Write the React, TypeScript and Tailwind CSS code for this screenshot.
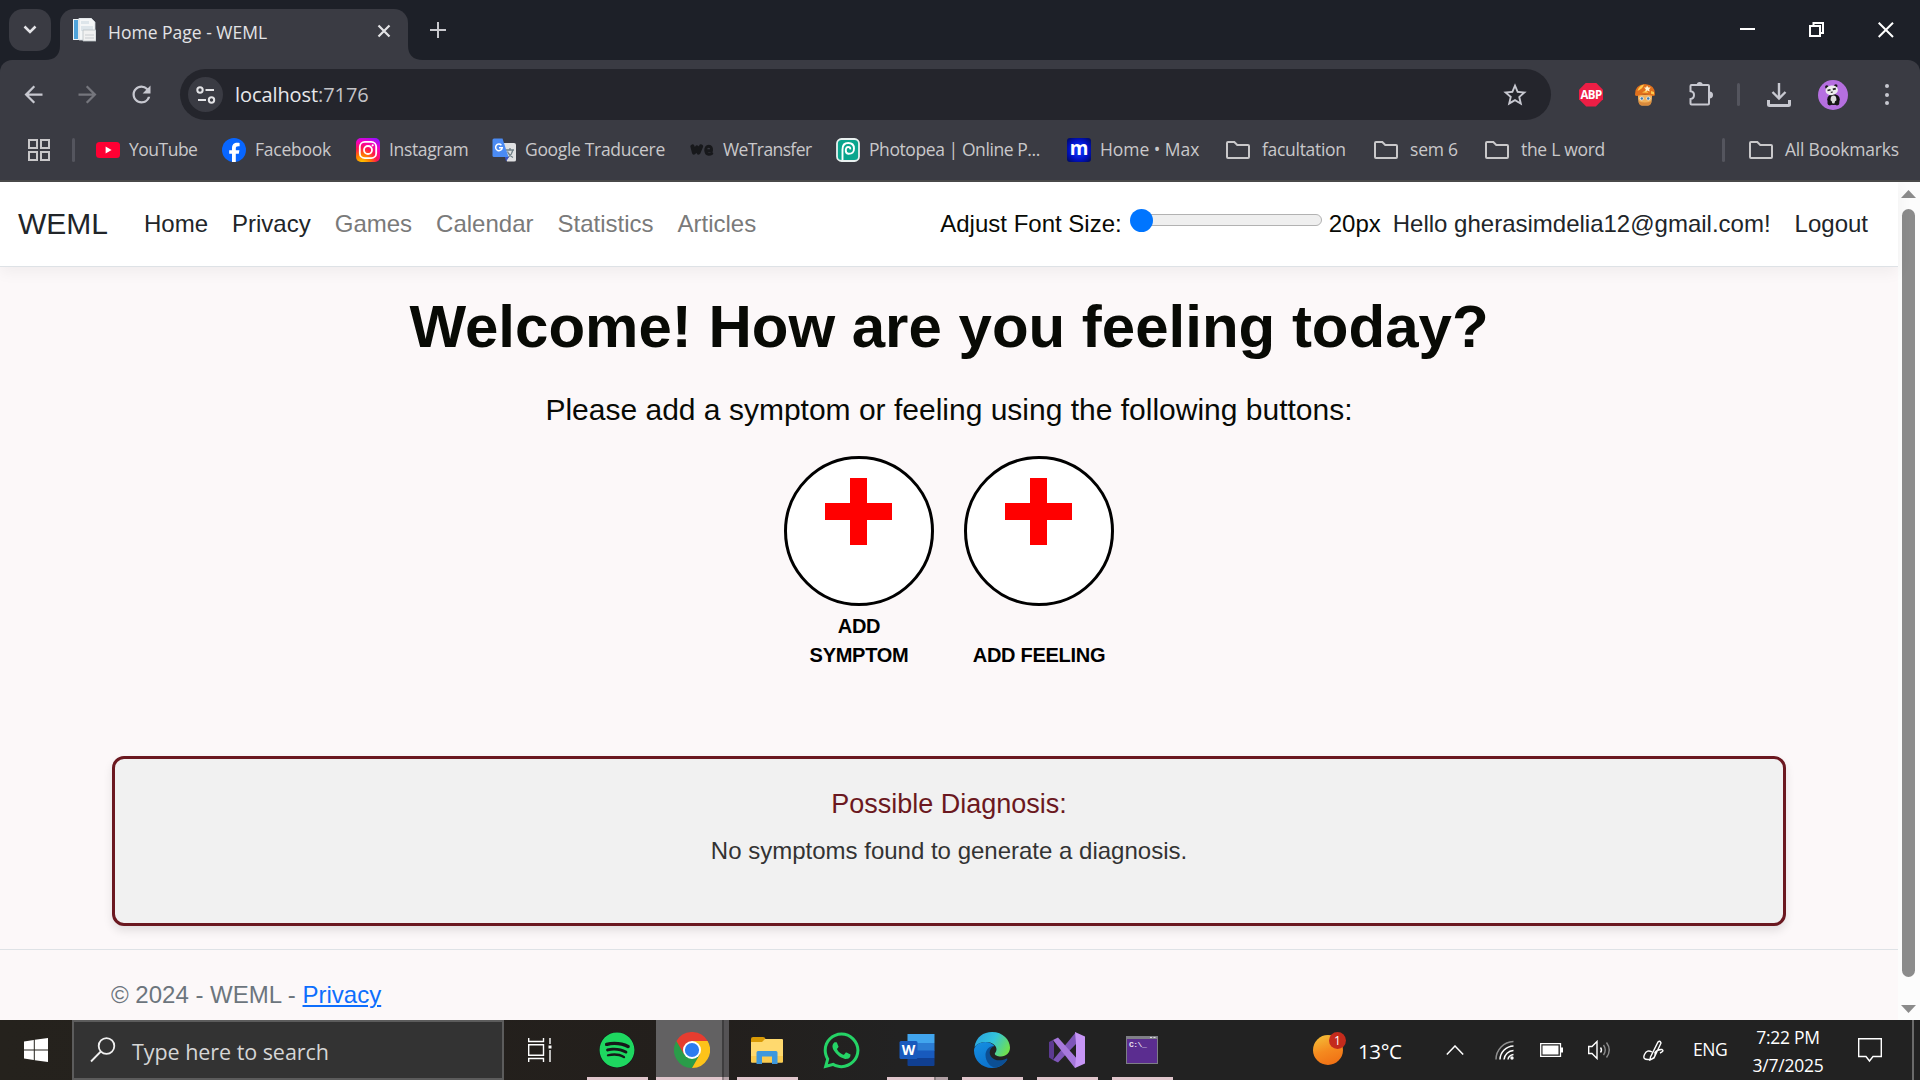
import React from "react";
import { FaSpotify, FaWhatsapp } from "react-icons/fa";
import { MdArrowBack, MdArrowForward, MdRefresh, MdStarBorder } from "react-icons/md";

const ui = "font-['Open_Sans','Noto_Sans',sans-serif]";

function FolderIcon() {
  return (
    <svg width="24" height="18" viewBox="0 0 24 18" fill="none" stroke="#c9c8ca" strokeWidth="2">
      <path d="M1 2Q1 1 2 1H8.3L11.3 4H22Q23 4 23 5V16Q23 17 22 17H2Q1 17 1 16Z" />
    </svg>
  );
}

function YouTubeIcon() {
  return (
    <svg width="24" height="24" viewBox="0 0 24 24">
      <rect x="0" y="4" width="24" height="16" rx="3.5" fill="#ff0033" />
      <path d="M9.6 8.6v6.8l6-3.4z" fill="#fff" />
    </svg>
  );
}

function FacebookIcon() {
  return (
    <svg width="24" height="24" viewBox="0 0 24 24">
      <circle cx="12" cy="12" r="12" fill="#0866ff" />
      <path d="M10 24v-8.2H7.2v-3.5H10v-1.8c0-4 1.9-5.7 5.4-5.7.7 0 1.7.1 2.2.3v3.2h-1.4c-1.8 0-2.4.7-2.4 2.2v1.8h3.6l-.6 3.5h-3V24z" fill="#fff" />
    </svg>
  );
}

function InstagramIcon() {
  return (
    <svg width="24" height="24" viewBox="0 0 24 24">
      <defs>
        <radialGradient id="insta" cx="0.25" cy="1.05" r="1.15">
          <stop offset="0" stopColor="#ffd000" />
          <stop offset="0.3" stopColor="#ff7a00" />
          <stop offset="0.55" stopColor="#ff1450" />
          <stop offset="0.8" stopColor="#f500c0" />
          <stop offset="1" stopColor="#9a10ff" />
        </radialGradient>
      </defs>
      <rect width="24" height="24" rx="5" fill="url(#insta)" />
      <g fill="none" stroke="#fff" strokeWidth="1.8">
        <rect x="3.8" y="3.8" width="16.4" height="16.4" rx="5" />
        <circle cx="12" cy="12" r="4" />
      </g>
      <circle cx="16.7" cy="7.3" r="1.1" fill="#fff" />
    </svg>
  );
}

function TranslateIcon() {
  return (
    <svg width="24" height="24" viewBox="0 0 24 24">
      <path d="M9 5H22Q24 5 24 7V22Q24 23.5 22 23.5H15z" fill="#dfe0e2" />
      <path d="M14 12h8M18 10v2M15.5 19.5Q20 17 20.8 12M15.5 13.5Q17 17.5 21 19.5" stroke="#6f7f86" strokeWidth="1.3" fill="none" />
      <path d="M13 19h4l-3 4.5z" fill="#3a51c0" />
      <path d="M2 0.500H10.500L16.500 19H2Q0.500 19 0.500 17.500V2Q0.500 0.500 2 0.500z" fill="#4b8bf4" />
      <path d="M9.4 7.2A3.3 3.3 0 1 0 10.2 9.800H7" fill="none" stroke="#fff" strokeWidth="1.5" />
    </svg>
  );
}

function WeIcon() {
  return (
    <svg width="24" height="24" viewBox="0 0 24 24" fill="none" stroke="#17181b" strokeLinecap="round" strokeLinejoin="round">
      <path d="M2.500 8.500L4 14.500L7 9.500L8.500 14.500L11 8.500" strokeWidth="4.200" />
      <path d="M17 12.800H21.500Q22 8.300 18.800 8.300T15.700 12.300T18.800 16.200Q20.500 16.200 21.800 15.400" strokeWidth="2.900" />
    </svg>
  );
}

function PhotopeaIcon() {
  return (
    <svg width="24" height="24" viewBox="0 0 24 24">
      <rect x="1" y="1" width="22" height="22" rx="4.500" fill="#0aa58e" stroke="#e8f0ef" strokeWidth="1.800" />
      <path d="M6.500 22V11.500Q6.500 5 12.200 5T18 10.500T12.300 15.800Q9.500 15.300 9.800 12T12.500 9Q14.500 9.200 14.200 11.300" fill="none" stroke="#fff" strokeWidth="1.900" />
    </svg>
  );
}

function MaxIcon() {
  return (
    <span className="flex size-6 items-center justify-center rounded-[3px] bg-[radial-gradient(circle,#0a30f5_20%,#0010c0_60%,#000a50_100%)] font-['Open_Sans',sans-serif] text-[19px] font-bold leading-none text-white">
      <span className="-mt-1">m</span>
    </span>
  );
}

const bookmarks: { label: string; icon: React.ReactNode; box: string; text: string }[] = [
  { label: "YouTube", icon: <YouTubeIcon />, box: "w-[126px] gap-[9px]", text: "tracking-[-0.5px]" },
  { label: "Facebook", icon: <FacebookIcon />, box: "w-[134px] gap-[9px]", text: "tracking-[-0.25px]" },
  { label: "Instagram", icon: <InstagramIcon />, box: "w-[136px] gap-[9px]", text: "tracking-[-0.35px]" },
  { label: "Google Traducere", icon: <TranslateIcon />, box: "w-[198px] gap-[9px]", text: "tracking-[-0.33px]" },
  { label: "WeTransfer", icon: <WeIcon />, box: "w-[146px] gap-[9px]", text: "tracking-[-0.6px]" },
  { label: "Photopea | Online P...", icon: <PhotopeaIcon />, box: "w-[231px] gap-[9px]", text: "tracking-[-0.42px]" },
  { label: "Home • Max", icon: <MaxIcon />, box: "w-[159px] gap-[9px]", text: "tracking-[-0.05px]" },
  { label: "facultation", icon: <FolderIcon />, box: "w-[148px] gap-[12px]", text: "tracking-[-0.3px]" },
  { label: "sem 6", icon: <FolderIcon />, box: "w-[111px] gap-[12px]", text: "tracking-[-0.2px]" },
  { label: "the L word", icon: <FolderIcon />, box: "w-[237px] gap-[12px]", text: "tracking-[-0.3px]" },
];

function PageFavicon() {
  return (
    <svg width="24" height="24" viewBox="0 0 24 24">
      <path d="M1 1h14v21H1z" fill="#eef3f6" />
      <path d="M2 2h4v19H2z" fill="#4fa3da" />
      <path d="M7 0h12l4 4v18H7z" fill="#f4f6f7" stroke="#cfd6da" strokeWidth="0.800" />
      <path d="M9 3h8v3H9zM9 8h12v5H9z" fill="#dde5ea" />
      <path d="M11 12h13v11H11z" fill="#f1f1f1" stroke="#b9c0c4" strokeWidth="0.800" />
      <path d="M13 17h9M13 20h9" stroke="#c9ced1" strokeWidth="1.200" />
    </svg>
  );
}

function TitleBar() {
  return (
    <div className="flex h-[60px] w-full bg-[#1d2028]">
      <div className="ml-[9px] mt-[9px] flex size-[42px] items-center justify-center rounded-[14px] bg-[#3a3b43]">
        <svg width="14" height="10" viewBox="0 0 14 10" fill="none" stroke="#e4e4e8" strokeWidth="2.500">
          <path d="M1.500 1.500L7 7L12.500 1.500" />
        </svg>
      </div>
      <svg className="-ml-[6px] mt-[45px]" width="15" height="15" viewBox="0 0 15 15">
        <path d="M15 0V15H0Q15 15 15 0z" fill="#3a3b43" />
      </svg>
      <div className="mt-[9px] flex h-[51px] w-[348px] items-center rounded-t-[14px] bg-[#3a3b43] pl-3 pr-[17px]">
        <div className="-mt-[10px]"><PageFavicon /></div>
        <span className="-mt-[5px] ml-3 flex-1 whitespace-nowrap text-[17.500px] text-[#e3e3e6]">Home Page - WEML</span>
        <svg className="-mt-[8px]" width="14" height="14" viewBox="0 0 14 14" stroke="#e3e3e6" strokeWidth="2.200">
          <path d="M1.500 1.500L12.500 12.500M12.500 1.500L1.500 12.500" />
        </svg>
      </div>
      <svg className="mt-[45px]" width="15" height="15" viewBox="0 0 15 15">
        <path d="M0 0V15H15Q0 15 0 0z" fill="#3a3b43" />
      </svg>
      <svg className="ml-[7px] mt-[22px]" width="16" height="16" viewBox="0 0 16 16" stroke="#c9c9ce" strokeWidth="2">
        <path d="M8 0V16M0 8H16" />
      </svg>
      <div className="ml-auto mr-[26px] mt-[22px] flex gap-[53px]">
        <svg width="16" height="16" viewBox="0 0 16 16"><path d="M0 6h15v2h-15z" fill="#fff" /></svg>
        <svg width="16" height="16" viewBox="0 0 16 16" fill="none" stroke="#fff" strokeWidth="2">
          <path d="M1 4H11V14H1zM4.500 4V1H14V11H11" />
        </svg>
        <svg width="16" height="16" viewBox="0 0 16 16" stroke="#fff" strokeWidth="2">
          <path d="M0.700 0.700L15 15M15 0.700L0.700 15" />
        </svg>
      </div>
    </div>
  );
}

function Mushroom() {
  return (
    <svg width="22" height="24" viewBox="0 0 22 24">
      <path d="M4 12Q3.500 22 8 22.500H14Q18.500 22 18 12z" fill="#f2b25c" />
      <path d="M4.500 18Q5 22.500 8 22.500H14Q17 22.500 17.500 18Q11 21 4.500 18z" fill="#d98a3c" />
      <path d="M1 11.500Q0.500 2 11 1Q21.500 2 21 11.500Q21 13 19 13Q11 10.500 3 13Q1 13 1 11.500z" fill="#e0701c" />
      <path d="M3.500 8Q5 2.500 10 1.500Q8.500 6 3.500 8zM8 9.500L12 7.500L14.500 9.800zM17 8l3 1v2.500l-3-.8z" fill="#ffc94d" />
      <path d="M13 2.500l1.300 1.900 2.500.2-1.700 1.700.6 2.300-2.400-1.200-2 1.200.5-2.300L10 4.600l2.200-.2z" fill="#fff3d0" />
      <circle cx="7.600" cy="15.500" r="2.100" fill="#dfe8ee" />
      <circle cx="14.400" cy="15.500" r="2.100" fill="#dfe8ee" />
      <circle cx="7.800" cy="15.500" r="1.200" fill="#3f79a8" />
      <circle cx="14.200" cy="15.500" r="1.200" fill="#3f79a8" />
    </svg>
  );
}

function PandaAvatar() {
  return (
    <svg width="30" height="30" viewBox="0 0 30 30">
      <circle cx="15" cy="15" r="15" fill="#b56fe0" />
      <ellipse cx="15.500" cy="19.500" rx="6.300" ry="5.500" fill="#111" />
      <ellipse cx="15.500" cy="19.500" rx="2.900" ry="4" fill="#dcdcdc" />
      <circle cx="11.800" cy="23" r="2.400" fill="#161616" />
      <circle cx="19" cy="23" r="2.400" fill="#161616" />
      <circle cx="8.800" cy="7" r="1.700" fill="#161616" />
      <circle cx="17.800" cy="6" r="1.700" fill="#161616" />
      <ellipse cx="13.700" cy="10.300" rx="6.200" ry="4.800" fill="#ededed" transform="rotate(-8 13.700 10.300)" />
      <path d="M9.500 10.500l3-.8M14.800 9.400l3-.8" stroke="#222" strokeWidth="1.700" />
      <path d="M12.800 12.300l2-.3" stroke="#222" strokeWidth="1.200" />
    </svg>
  );
}

function Toolbar() {
  return (
    <div className="w-full bg-[#1d2028]">
      <div className="flex h-[69px] w-full items-center rounded-t-[12px] bg-[#3a3b43] pl-[19.500px]">
        <MdArrowBack size={27} color="#c7c8d0" />
        <MdArrowForward size={27} color="#75767d" className="ml-[27px]" />
        <MdRefresh size={27} color="#c7c8d0" className="ml-[27px]" />
        <div className="ml-[25.500px] flex h-[51px] w-[1371px] items-center rounded-full bg-[#24252c] pl-2 pr-[22px]">
          <div className="flex size-[35px] items-center justify-center rounded-full bg-[#3a3b43]">
            <svg width="20" height="18" viewBox="0 0 20 18" fill="none" stroke="#e3e3e6" strokeWidth="2">
              <circle cx="4" cy="4" r="2.700" />
              <path d="M9.500 4H18M2 14H10" />
              <circle cx="15.500" cy="14" r="2.700" />
            </svg>
          </div>
          <span className="ml-[12px] flex-1 whitespace-nowrap text-[20px] leading-none tracking-[-0.080px] text-[#e8e8ea]">
            localhost<span className="text-[#c3c3c7]">:7176</span>
          </span>
          <MdStarBorder size={28} color="#c7c8d0" />
        </div>
        <div className="ml-[28px] flex h-6 w-6 items-center justify-center whitespace-nowrap bg-[#ed1e45] text-[11.500px] font-bold leading-none tracking-[-0.600px] text-white [clip-path:polygon(30%_0,70%_0,100%_30%,100%_70%,70%_100%,30%_100%,0_70%,0_30%)]">
          ABP
        </div>
        <div className="ml-[31px]"><Mushroom /></div>
        <svg className="ml-[32px]" width="25" height="25" viewBox="0 0 25 25">
          <path d="M2.500 4Q2.500 3 3.500 3H20Q21 3 21 4V21.500Q21 22.500 20 22.500H3.500Q2.500 22.500 2.500 21.500V17Q6 16.500 6 13T2.500 9.200z" fill="none" stroke="#c7c8d0" strokeWidth="2" />
          <path d="M8.500 3Q9 0 11.700 0T15 3zM21.500 9.500Q25 9.800 25 13T21.500 16.500z" fill="#c7c8d0" />
        </svg>
        <div className="ml-6 h-[23px] w-[3px] rounded bg-[#54555e]" />
        <svg className="ml-[27px]" width="24" height="24" viewBox="0 0 24 24" fill="none" stroke="#c7c8d0">
          <path d="M12 0V15M5.500 9L12 15.500L18.500 9" strokeWidth="2.400" />
          <path d="M1.500 17V21.500Q1.500 22.500 2.500 22.500H21.500Q22.500 22.500 22.500 21.500V17" strokeWidth="3" />
        </svg>
        <div className="ml-[27px]"><PandaAvatar /></div>
        <div className="ml-[37px] flex flex-col gap-[4.500px]">
          <div className="size-1 rounded-full bg-[#c7c8d0]" />
          <div className="size-1 rounded-full bg-[#c7c8d0]" />
          <div className="size-1 rounded-full bg-[#c7c8d0]" />
        </div>
      </div>
    </div>
  );
}

function BookmarkBar() {
  return (
    <div className="flex h-[53px] w-full items-center border-b-2 border-[#484848] bg-[#3a3b43] pb-[9px] pl-7 text-[17.500px] leading-none text-[#c9c8ca]">
      <div className="grid grid-cols-2 gap-[2px]">
        <div className="size-[10px] border-2 border-[#c9c8ca]" />
        <div className="size-[10px] border-2 border-[#c9c8ca]" />
        <div className="size-[10px] border-2 border-[#c9c8ca]" />
        <div className="size-[10px] border-2 border-[#c9c8ca]" />
      </div>
      <div className="ml-[22px] mr-[21px] h-6 w-[3px] rounded bg-[#54555e]" />
      {bookmarks.map((b) => (
        <div key={b.label} className={`flex shrink-0 items-center ${b.box}`}>
          {b.icon}
          <span className={`whitespace-nowrap ${b.text}`}>{b.label}</span>
        </div>
      ))}
      <div className="mr-6 h-6 w-[3px] shrink-0 rounded bg-[#54555e]" />
      <div className="flex items-center gap-[12px]">
        <FolderIcon />
        <span className="whitespace-nowrap tracking-[-0.220px]">All Bookmarks</span>
      </div>
    </div>
  );
}

function NavBar() {
  return (
    <nav className="relative flex h-[85px] items-center border-b border-[#dee2e6] bg-white pl-[18px] text-[24px] leading-none shadow-[0_5px_15px_rgba(0,0,0,0.05)]">
      <span className="text-[30px] text-[#212529]">WEML</span>
      <div className="ml-[36px] flex gap-6 text-[#212529]">
        <span>Home</span>
        <span>Privacy</span>
        <span className="text-[#7a7a7a]">Games</span>
        <span className="text-[#7a7a7a]">Calendar</span>
        <span className="text-[#7a7a7a]">Statistics</span>
        <span className="text-[#7a7a7a]">Articles</span>
      </div>
      <div className="ml-auto mr-[30px] flex items-center whitespace-nowrap text-[#080a05]">
        <span>Adjust Font Size:</span>
        <div className="-mt-[8px] ml-2 flex w-[192px] items-center">
          <div className="z-10 size-[23px] shrink-0 rounded-full bg-[#0075ff]" />
          <div className="-ml-3 h-3 flex-1 rounded-r-full border border-[#b2b2b2] bg-[#efefef]" />
        </div>
        <span className="ml-[7px]">20px</span>
        <span className="ml-3 text-[#212529]">Hello gherasimdelia12@gmail.com!</span>
        <span className="ml-6 text-[#212529]">Logout</span>
      </div>
    </nav>
  );
}

function AddButton({ label }: { label: string }) {
  return (
    <div className="flex w-[150px] flex-col items-center">
      <div className="flex size-[150px] justify-center rounded-full border-[3px] border-black bg-white pr-[1px] pt-[19px]">
        <div className="grid h-[67px] w-[67px] shrink-0 grid-cols-[25px_17px_25px] grid-rows-[25px_17px_25px]">
          <div className="col-start-2 row-start-1 bg-[#ff0000]" />
          <div className="col-span-3 row-start-2 bg-[#ff0000]" />
          <div className="col-start-2 row-start-3 bg-[#ff0000]" />
        </div>
      </div>
      <div className="mt-[4px] flex h-[60px] w-[145px] items-end justify-center text-center text-[20px] font-bold leading-[29px] tracking-[-0.270px] text-black">
        {label === "ADD SYMPTOM" ? <span className="w-[120px]">{label}</span> : <span>{label}</span>}
      </div>
    </div>
  );
}

function Page() {
  return (
    <div className="flex h-[838px] w-full overflow-hidden bg-[#fcf8f9] font-['Liberation_Sans',Arial,sans-serif]">
      <div className="w-[1898px] shrink-0">
        <NavBar />
        <main className="flex flex-col items-center">
          <h1 className="mt-[24px] text-[60px] font-bold leading-[72px] text-[#080a05]">Welcome! How are you feeling today?</h1>
          <p className="mt-[24px] text-[30px] leading-[45px] text-[#080a05]">Please add a symptom or feeling using the following buttons:</p>
          <div className="mt-6 flex gap-[30px]">
            <AddButton label="ADD SYMPTOM" />
            <AddButton label="ADD FEELING" />
          </div>
          <section className="mt-[86px] flex h-[170px] w-[1674px] flex-col items-center rounded-[12px] border-[3px] border-[#6b1820] bg-[#f1f1f1] shadow-[0_5px_10px_rgba(0,0,0,0.1)]">
            <h2 className="mt-[29px] text-[27px] leading-[33px] text-[#6b1820]">Possible Diagnosis:</h2>
            <p className="mt-[11px] text-[24px] leading-[38px] text-[#333]">No symptoms found to generate a diagnosis.</p>
          </section>
        </main>
        <footer className="mt-[23px] h-20 border-t border-[#dee2e6] pl-[111px] pt-[27px] text-[24px] leading-[36px] text-[#6c757d]">
          © 2024 - WEML - <span className="text-[#0d6efd] underline decoration-2 underline-offset-2">Privacy</span>
        </footer>
      </div>
      <div className="flex w-[22px] flex-col items-center bg-[#fcfcfc] pr-[1px] pt-2">
        <svg width="15" height="8" viewBox="0 0 15 8"><path d="M7.500 0L15 8H0z" fill="#8b8b8b" /></svg>
        <div className="mt-[11px] h-[768px] w-[13px] rounded-full bg-[#8b8b8b]" />
        <svg className="mt-7" width="15" height="8" viewBox="0 0 15 8"><path d="M0 0H15L7.500 8z" fill="#8b8b8b" /></svg>
      </div>
    </div>
  );
}

function ChromeIcon() {
  return (
    <svg width="36" height="36" viewBox="0 0 36 36">
      <path d="M18 18L2.400 9A18 18 0 0 0 18 36L25.800 22.500z" fill="#2a9c49" />
      <path d="M18 18L25.800 22.500L18 36A18 18 0 0 0 33.600 9H18z" fill="#fdc31a" />
      <path d="M10.200 22.500L2.400 9A18 18 0 0 1 33.600 9H18z" fill="#e63d30" />
      <circle cx="18" cy="18" r="9" fill="#fff" />
      <circle cx="18" cy="18" r="7.100" fill="#2c7cf0" />
    </svg>
  );
}

function ExplorerIcon() {
  return (
    <svg width="36" height="36" viewBox="0 0 36 36">
      <path d="M2 7Q2 5 4 5H14Q16 5 16.500 7V14H2z" fill="#d99a05" />
      <path d="M2 10H13L16 7H33Q34 7 34 8V29Q34 30.500 33 30.500H3Q2 30.500 2 29z" fill="#ffd96e" />
      <path d="M2 24H34V29Q34 30.500 33 30.500H3Q2 30.500 2 29z" fill="#fbcb4e" />
      <path d="M7.500 32V20.500Q7.500 19 9 19H27Q28.500 19 28.500 20.500V32H23V24.500H13V32z" fill="#3e97dc" />
    </svg>
  );
}

function WordIcon() {
  return (
    <svg width="36" height="36" viewBox="0 0 36 36">
      <rect x="8.500" y="2" width="27" height="9" fill="#41a5ee" />
      <rect x="8.500" y="11" width="27" height="8" fill="#2b7cd3" />
      <rect x="8.500" y="18.500" width="27" height="8" fill="#185abd" />
      <rect x="8.500" y="26" width="27" height="8" rx="1" fill="#103f91" />
      <rect x="0.500" y="9" width="18" height="18" rx="1.500" fill="#185abd" />
      <text x="9.500" y="23" textAnchor="middle" fill="#fff" className="font-['Open_Sans',sans-serif] text-[14px] font-bold">W</text>
    </svg>
  );
}

function EdgeIcon() {
  return (
    <svg width="36" height="36" viewBox="0 0 36 36">
      <defs>
        <linearGradient id="edgeTop" x1="0" y1="0.200" x2="1" y2="0.600">
          <stop offset="0" stopColor="#2aa4e0" />
          <stop offset="0.500" stopColor="#33c3dc" />
          <stop offset="1" stopColor="#6fe04e" />
        </linearGradient>
        <linearGradient id="edgeLeft" x1="0" y1="0" x2="0.600" y2="1">
          <stop offset="0" stopColor="#1590e2" />
          <stop offset="1" stopColor="#0b6fcb" />
        </linearGradient>
      </defs>
      <path d="M0.500 15C2 5 9.500 0 18 0C29 0 36 8 36 15.500C36 21 32 24.500 27 24.500C23 24.500 20.800 23 20.800 21.800C20.800 20.800 22.500 20 22.500 17.200C22.500 13.500 18 10 12 10C6 10 2 13 0.500 15z" fill="url(#edgeTop)" />
      <path d="M13 27C13 17 17 14.500 20.500 14C18 11.500 15 10 11.500 10C5 10 0 14 0 18.500C0 28 7.500 36 18 36C26 36 32 31 33 27C24 33 14 30 13 27z" fill="url(#edgeLeft)" />
      <path d="M20.500 14C14 14 11.500 19 11.500 23C11.500 30 17 36 22 35.600C27 34.500 31.500 31 33.300 27.500C33.600 26.600 33 26.200 32.200 26.700C22 31.500 14 25 16 18.500Q17 15 20.500 14z" fill="#0c4f94" />
    </svg>
  );
}

function VisualStudioIcon() {
  return (
    <svg width="36" height="36" viewBox="0 0 36 36">
      <path d="M4 8L0 10V25.500L4 28L5 24V12z" fill="#5c3a91" />
      <path d="M4 28L9 30.500L27 12V0z" fill="#7e56b8" />
      <path d="M4 8L9 5.500L30 29L26 36z" fill="#a678dc" />
      <path d="M26 0L36 4.500V31.500L26 36L27 25V11z" fill="#c695f5" />
    </svg>
  );
}

function TerminalIcon() {
  return (
    <svg width="32" height="28" viewBox="0 0 32 28">
      <rect x="0.500" y="0.500" width="31" height="27" fill="#5b2d90" stroke="#7e7e86" />
      <path d="M0.500 0.500h31v2.500h-31z" fill="#808088" />
      <path d="M24 1.500h2M27.500 1.500h2" stroke="#ddd" />
      <text x="3" y="11" fill="#e8e0f0" className="font-['Liberation_Mono',monospace] text-[8px] font-bold tracking-[-0.500px]">C:\_</text>
    </svg>
  );
}

const apps: { name: string; icon: React.ReactNode; box: string; bar: string }[] = [
  {
    name: "spotify",
    icon: <span className="rounded-full bg-[#16181a]"><FaSpotify size={36} color="#1ed760" /></span>,
    box: "w-[61px]",
    bar: "bg-[#e0c6cc]",
  },
  { name: "chrome", icon: <ChromeIcon />, box: "w-[73px] bg-[linear-gradient(90deg,#626162_66px,#3e3d3e_66px,#3e3d3e_68px,#555355_68px)]", bar: "bg-[linear-gradient(90deg,#e0c6cc_66px,#8f8084_66px,#8f8084_68px,#b5a3a8_68px)]" },
  { name: "explorer", icon: <ExplorerIcon />, box: "w-[61px]", bar: "bg-[#e0c6cc]" },
  { name: "whatsapp", icon: <FaWhatsapp size={41} color="#25d366" className="shrink-0" />, box: "w-[61px]", bar: "bg-transparent" },
  { name: "word", icon: <WordIcon />, box: "w-[61px]", bar: "bg-[linear-gradient(90deg,#e0c6cc_47px,#8a7d80_47px,#8a7d80_49px,#b09fa4_49px)]" },
  { name: "edge", icon: <EdgeIcon />, box: "w-[61px]", bar: "bg-[#e0c6cc]" },
  { name: "visual-studio", icon: <VisualStudioIcon />, box: "w-[61px]", bar: "bg-[#e0c6cc]" },
  { name: "terminal", icon: <TerminalIcon />, box: "w-[61px]", bar: "bg-[#e0c6cc]" },
];

function Taskbar() {
  return (
    <div className="flex h-[60px] w-full bg-[linear-gradient(90deg,#25221d_0px,#231f1c_700px,#222222_900px)] text-white">
      <div className="flex w-[72px] items-center justify-center">
        <svg width="24" height="24" viewBox="0 0 24 24" fill="#fff">
          <path d="M0 3.400L9.800 2V11.500H0zM10.800 1.800L24 0V11.500H10.800zM0 12.500H9.800V22L0 20.600zM10.800 12.500H24V24L10.800 22.200z" />
        </svg>
      </div>
      <div className="flex w-[432px] items-center border-2 border-[#5c5c5c] bg-[#333] pl-4">
        <svg width="26" height="26" viewBox="0 0 26 26" fill="none" stroke="#f0f0f0" strokeWidth="1.800">
          <circle cx="16.500" cy="9" r="7.800" />
          <path d="M10.800 14.500L1 24.500" />
        </svg>
        <span className="ml-[16px] whitespace-nowrap pt-[3px] text-[21.500px] leading-none tracking-[-0.050px] text-[#d6d6d6]">Type here to search</span>
      </div>
      <svg className="ml-6 mt-[18px]" width="25" height="24" viewBox="0 0 25 24" fill="none" stroke="#fff" strokeWidth="1.400">
        <path d="M0.700 0V3.500H15.500V0M0.700 6.700H15.500V17.300H0.700zM0.700 24V20.500H15.500V24M22 0V6M22 12V24" />
        <path d="M20.500 7.500h3v3h-3z" fill="#fff" stroke="none" />
      </svg>
      <div className="ml-[34px] flex">
        {apps.map((a) => (
          <div key={a.name} className={`mr-[7px] flex flex-col first:mr-2 [&:nth-child(2)]:mr-2 [&:nth-child(n+3)]:mr-[14px] ${a.box}`}>
            <div className="flex h-[57px] items-center justify-center pr-[1.500px] pt-[3px]">{a.icon}</div>
            <div className={`h-[3px] ${a.bar}`} />
          </div>
        ))}
      </div>
      <div className="ml-auto flex items-center">
        <div className="relative size-[30px] rounded-full bg-[linear-gradient(160deg,#f3c43a,#f58a1f_50%,#ef6a12)]">
          <span className="absolute -right-[3px] -top-[3px] flex size-[17px] items-center justify-center rounded-full bg-[#c42b1c] text-[12px] leading-none">1</span>
        </div>
        <span className="ml-[15px] w-[88px] whitespace-nowrap pt-[2px] text-[20.500px] leading-none tracking-[-0.400px]">13°C</span>
        <svg width="18" height="10" viewBox="0 0 18 10" fill="none" stroke="#fff" strokeWidth="1.500"><path d="M0.800 9.500L9 1L17.200 9.500" /></svg>
        <svg className="ml-[31px]" width="19" height="20" viewBox="0 0 19 20" fill="none" strokeWidth="1.500">
          <path d="M1 19.500A18 18 0 0 1 18.500 1.500" stroke="#8f8f8f" />
          <path d="M5 19.500A14 14 0 0 1 18.500 6M9 19.500A10 10 0 0 1 18.500 10.500M13 19.500Q13.500 15.500 18.500 14.500" stroke="#fff" />
          <circle cx="17" cy="18" r="1.700" fill="#fff" />
        </svg>
        <svg className="ml-[26px]" width="23" height="14" viewBox="0 0 23 14" fill="none" stroke="#fff" strokeWidth="1.300">
          <path d="M0.700 0.700H20.500V13.300H0.700z" /><path d="M2.500 2.500h16v9h-16z" fill="#fff" stroke="none" /><path d="M22 4.500V9.500" strokeWidth="2" />
        </svg>
        <svg className="ml-[25px]" width="23" height="20" viewBox="0 0 23 20" fill="none" stroke="#fff" strokeWidth="1.400">
          <path d="M0.700 6.500H4L9 1.500V18.500L4 13.500H0.700z" /><path d="M12.500 7.500Q14.500 10 12.500 12.500" /><path d="M15.500 5Q19 10 15.500 15M18.500 2.500Q24 10 18.500 17.500" stroke="#8a8a8a" />
        </svg>
        <svg className="ml-[32px]" width="21" height="21" viewBox="0 0 21 21" fill="none" stroke="#fff" strokeWidth="1.400">
          <path d="M7.500 17L15 2Q17 0 18 3L11 18L7 20zM9 12Q4 9 1.500 14.500T6 19.500T12 12.500Q15 9 19 9.500Q21.500 11 17 13" />
        </svg>
        <span className="ml-[29px] w-[57px] text-[17.500px] leading-none tracking-[-0.500px]">ENG</span>
        <div className="flex w-[76px] flex-col items-center whitespace-nowrap pt-[1px] text-[17.500px] leading-[28px] tracking-[-0.250px]">
          <span>7:22 PM</span>
          <span>3/7/2025</span>
        </div>
        <svg className="ml-[32px]" width="24" height="25" viewBox="0 0 24 25" fill="none" stroke="#fff" strokeWidth="1.400">
          <path d="M0.700 0.700H23.300V18.500H15L11.500 23L8 18.500H0.700z" />
        </svg>
        <div className="ml-[30px] h-[60px] w-[2px] bg-[#6a6a6a]" />
        <div className="w-[6px]" />
      </div>
    </div>
  );
}

export default function App() {
  return (
    <div className={`flex h-[1080px] w-[1920px] flex-col overflow-hidden ${ui}`}>
      <TitleBar />
      <Toolbar />
      <BookmarkBar />
      <Page />
      <Taskbar />
    </div>
  );
}
